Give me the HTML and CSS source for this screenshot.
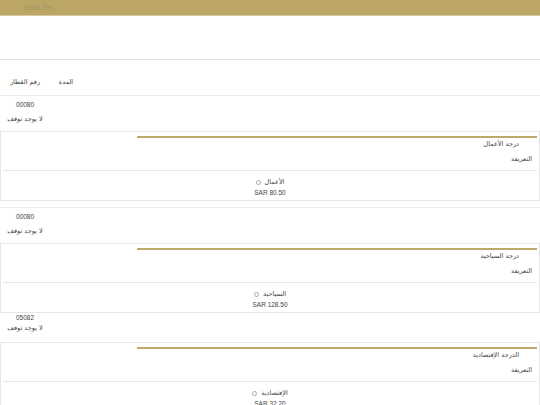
FILE: index.html
```html
<!DOCTYPE html>
<html lang="ar" dir="ltr">
<head>
<meta charset="utf-8">
<title>Trains</title>
<link rel="stylesheet" href="styles.css">
</head>
<body>
<div class="topbar"><span class="lang">ENGLISH</span></div>
<div class="hero"></div>
<div class="thead">
  <div class="col-num"><span class="ar">رقم القطار</span></div>
  <div class="col-dur"><span class="ar">المدة</span></div>
</div>

<div class="trow">
  <div class="col-num">
    <div class="num">00080</div>
    <div class="ar">لا يوجد توقف</div>
  </div>
</div>
<div class="card">
  <div class="card-head">
    <div class="title ar">درجة الأعمال</div>
    <div class="fare ar">التعريفة</div>
  </div>
  <div class="divider"></div>
  <div class="option">
    <div class="opt-line"><span class="radio"></span><span class="ar">الأعمال</span></div>
    <div class="price">SAR 80.50</div>
  </div>
</div>

<div class="trow">
  <div class="col-num">
    <div class="num">00080</div>
    <div class="ar">لا يوجد توقف</div>
  </div>
</div>
<div class="card">
  <div class="card-head">
    <div class="title ar">درجة السياحية</div>
    <div class="fare ar">التعريفة</div>
  </div>
  <div class="divider"></div>
  <div class="option">
    <div class="opt-line"><span class="radio"></span><span class="ar">السياحية</span></div>
    <div class="price">SAR 128.50</div>
  </div>
</div>

<div class="trow trow--tight">
  <div class="col-num">
    <div class="num">05082</div>
    <div class="ar">لا يوجد توقف</div>
  </div>
</div>
<div class="card">
  <div class="card-head">
    <div class="title ar">الدرجة الإقتصادية</div>
    <div class="fare ar">التعريفة</div>
  </div>
  <div class="divider"></div>
  <div class="option">
    <div class="opt-line"><span class="radio"></span><span class="ar">الإقتصادية</span></div>
    <div class="price">SAR 32.20</div>
  </div>
</div>
</body>
</html>
```
FILE: styles.css
```css
* { box-sizing: border-box; }
html, body { margin: 0; padding: 0; }
body {
  width: 540px;
  background: #fff;
  color: #444;
  direction: ltr;
  font-family: "DejaVu Sans", "Liberation Sans", sans-serif;
  font-size: 7px;
  overflow: hidden;
}
.ar { font-family: "DejaVu Sans", sans-serif; font-size: 6.5px; }
.topbar {
  height: 16px;
  background: #bca665;
  border-bottom: 1px solid #d6caa6;
  padding-left: 24px;
  line-height: 15px;
}
.lang {
  font-family: "Liberation Sans", sans-serif;
  font-size: 6.5px;
  color: #a29466;
}
.hero {
  height: 44px;
  border-bottom: 1px solid #e4e4e4;
}
.thead {
  display: flex;
  height: 35px;
  align-items: flex-start;
  padding-top: 16px;
  line-height: 12px;
}
.col-num { width: 50px; text-align: center; }
.col-dur { width: 32px; text-align: center; }
.trow {
  display: flex;
  height: 36px;
  padding-top: 2px;
  border-top: 1px solid #ebebeb;
  line-height: 14px;
}
.trow--tight {
  border-top: 0;
  padding-top: 0;
  margin-top: -6px;
  height: 29px;
}
.trow--tight .num { line-height: 9px; }
.trow--tight .ar { line-height: 13px; }
.num { font-family: "Liberation Sans", sans-serif; font-size: 6.5px; }
.card {
  height: 70px;
  border: 1px solid #e6e6e6;
  margin-bottom: 6px;
}
.card-head {
  margin: 4px 2px 0 136px;
  border-top: 2px solid #bca96d;
  padding-bottom: 5px;
  text-align: right;
  line-height: 12px;
}
.title { padding-right: 18px; }
.fare { margin-top: 3px; padding-right: 5px; }
.divider {
  height: 1px;
  background: #e6e6e6;
  margin: 0 2px;
}
.option {
  display: flex;
  flex-direction: column;
  align-items: center;
  padding-top: 5px;
}
.opt-line {
  display: flex;
  flex-direction: row;
  direction: ltr;
  align-items: center;
  gap: 4px;
  line-height: 12px;
}
.radio {
  width: 5px;
  height: 5px;
  border: 1px solid #aaa;
  border-radius: 50%;
  display: inline-block;
}
.price {
  font-family: "Liberation Sans", sans-serif;
  font-size: 6.5px;
  line-height: 9px;
}
```
